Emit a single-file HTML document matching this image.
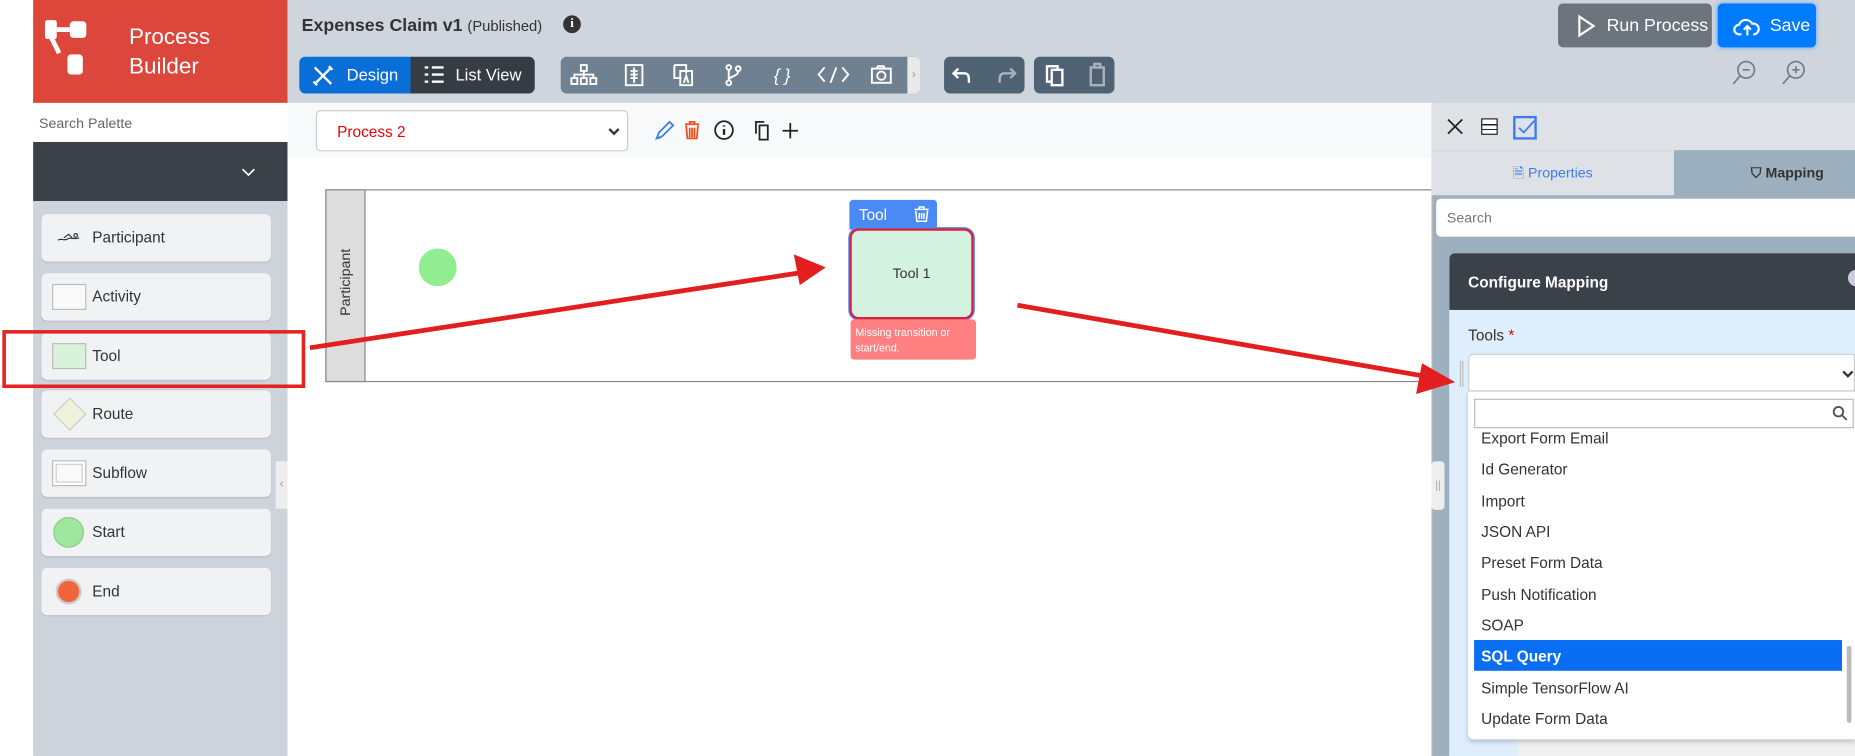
<!DOCTYPE html>
<html><head><meta charset="utf-8">
<style>
*{box-sizing:border-box;margin:0;padding:0}
html,body{width:1855px;height:756px;overflow:hidden;background:#fff;font-family:"Liberation Sans",sans-serif}
#w{position:absolute;left:0;top:0;width:1568px;height:639px;transform:scale(1.18304);transform-origin:0 0;overflow:hidden;background:#fff}
.a{position:absolute;white-space:nowrap}
.pi{position:absolute;left:35px;width:194px;height:40px;background:#f1f2f4;border-radius:5px;box-shadow:0 1px 1px rgba(0,0,0,.08);font-size:13px;color:#333}
.pi span{position:absolute;left:43px;top:12px}
.tb{position:absolute;top:48px;height:31px;border-radius:5px}
.dd{position:absolute;left:11px;font-size:13px;color:#333;white-space:nowrap}
svg{position:absolute;overflow:visible}
</style></head><body><div id="w">
<div class="a" style="left:243px;top:0;width:1325px;height:87px;background:#ced5dc"></div>
<div class="a" style="left:28px;top:0;width:215px;height:87px;background:#dc463b"></div>
<svg style="left:38px;top:17px" width="60" height="48"><rect x="0" y="0" width="10" height="16" rx="2" fill="#fff"/><rect x="10" y="6" width="11" height="4" fill="#fff"/><rect x="21" y="1" width="14" height="14" rx="3" fill="#fff"/><line x1="5" y1="14" x2="12" y2="28" stroke="#fff" stroke-width="4"/><rect x="19" y="29" width="13" height="17" rx="3" fill="#fff"/></svg>
<div class="a" style="left:109px;top:19px;color:#fff;font-size:19px;line-height:25px">Process<br>Builder</div>
<div class="a" style="left:255px;top:13px;font-size:15px;font-weight:bold;color:#333">Expenses Claim v1 <span style="font-weight:normal;font-size:12.5px">(Published)</span></div>
<div class="a" style="left:476px;top:13px;width:15px;height:15px;border-radius:50%;background:#333;color:#fff;font-size:11px;font-weight:bold;text-align:center;line-height:15px;font-family:'Liberation Serif'">i</div>
<div class="tb" style="left:253px;width:94px;background:#0a6ed8;border-radius:5px 0 0 5px;color:#fff;font-size:14px">
<svg style="left:11px;top:7px" width="18" height="18"><path d="M2 16L16 2M2 2l14 14M1 14l3 3M14 1l3 3" stroke="#fff" stroke-width="2" fill="none"/></svg>
<span style="position:absolute;left:40px;top:7px">Design</span></div>
<div class="tb" style="left:347px;width:105px;background:#363c43;border-radius:0 5px 5px 0;color:#fff;font-size:14px">
<svg style="left:12px;top:8px" width="16" height="15"><path d="M0 1h3M0 7h3M0 13h3M6 1h10M6 7h10M6 13h10" stroke="#fff" stroke-width="2"/></svg>
<span style="position:absolute;left:38px;top:7px">List View</span></div>
<div class="tb" style="left:474px;width:304px;background:#6f8190"></div>
<div class="tb" style="left:767px;width:11px;background:#e9e9e9;border-radius:0 5px 5px 0;color:#999;font-size:10px;text-align:center;line-height:31px">›</div>
<svg style="left:474px;top:48px" width="300" height="31" fill="none" stroke="#fff" stroke-width="1.6">
<rect x="17" y="7" width="5" height="5"/><path d="M19.5 12v3M11.5 18v-3h16v3M19.5 15v3"/><rect x="9" y="18" width="5" height="5"/><rect x="17" y="18" width="5" height="5"/><rect x="25" y="18" width="5" height="5"/>
<rect x="55" y="7" width="14" height="17"/><path d="M62 9v13M59 12h6M59 15h6M59 18h6"/>
<path d="M96 7h10v7M96 7v11h6"/><rect x="101" y="12" width="10" height="12"/><path d="M104 22l2-6 2 6"/>
<circle cx="142" cy="9" r="2"/><circle cx="142" cy="22" r="2"/><circle cx="150" cy="10" r="2"/><path d="M142 11v9M150 12c0 5-8 4-8 8"/>
<text x="180" y="21" fill="#fff" stroke="none" font-size="15" font-style="italic" font-family="Liberation Sans">{ }</text>
<path d="M223 9l-5 6 5 6M233 9l-5 13M238 9l5 6-5 6"/>
<rect x="263" y="10" width="16" height="12"/><path d="M267 10l1-2h5l1 2"/><circle cx="271" cy="16" r="3.5"/>
</svg>
<div class="tb" style="left:798px;width:68px;background:#4f6273">
<svg style="left:0;top:0" width="68" height="31" fill="none" stroke-width="2"><path d="M12 10l-4 4 4 4M8 14h9c3 0 4 2 4 5v3" stroke="#fff"/><path d="M56 10l4 4-4 4M60 14h-9c-3 0-4 2-4 5v3" stroke="#aab3bd"/></svg></div>
<div class="tb" style="left:874px;width:68px;background:#4f6273"><div class="a" style="left:10px;top:7px;width:11px;height:15px;border:2px solid #fff"></div><div class="a" style="left:14px;top:10px;width:11px;height:15px;border:2px solid #fff;background:#4f6273"></div><div class="a" style="left:47px;top:8px;width:13px;height:17px;border:2px solid #aab3bd"></div><div class="a" style="left:50px;top:5px;width:7px;height:5px;border:2px solid #aab3bd;background:#4f6273"></div></div>
<div class="a" style="left:1317px;top:3px;width:130px;height:37px;background:#6c757d;border-radius:4px;color:#fff;font-size:15px">
<svg style="left:17px;top:10px" width="14" height="18"><path d="M1 1l12 8-12 8z" fill="none" stroke="#fff" stroke-width="1.8"/></svg>
<span style="position:absolute;left:41px;top:10px">Run Process</span></div>
<div class="a" style="left:1452px;top:3px;width:83px;height:37px;background:#007bff;border-radius:4px;color:#fff;font-size:15px;box-shadow:0 0 4px #4aa3ff">
<svg style="left:13px;top:10px" width="24" height="18" fill="none" stroke="#fff" stroke-width="1.8"><path d="M7 16H5a4 4 0 010-8 6 6 0 0111-1 4.5 4.5 0 012 9h-1M12 17V9M9 12l3-3 3 3"/></svg>
<span style="position:absolute;left:44px;top:10px">Save</span></div>
<svg style="left:1462px;top:50px" width="70" height="25" fill="none" stroke="#778" stroke-width="1.4"><circle cx="14" cy="9" r="7"/><path d="M9 14l-6 7M11 9h6"/><circle cx="56" cy="9" r="7"/><path d="M51 14l-6 7M53 9h6M56 6v6"/></svg>
<div class="a" style="left:28px;top:87px;width:215px;height:33px;background:#fff;font-size:12px;color:#666;padding:10px 5px">Search Palette</div>
<div class="a" style="left:28px;top:120px;width:215px;height:50px;background:#3a4149"><svg style="left:176px;top:22px" width="12" height="8"><path d="M1 1l5 5 5-5" stroke="#fff" stroke-width="1.4" fill="none"/></svg></div>
<div class="a" style="left:28px;top:170px;width:215px;height:469px;background:#cdd3da"></div>
<div class="a" style="left:233px;top:390px;width:10px;height:40px;background:#eee;color:#999;font-size:10px;line-height:40px;text-align:center">‹</div>
<div class="pi" style="top:181px"><svg style="left:14px;top:16px" width="20" height="8" fill="none" stroke="#333" stroke-width="1"><path d="M0 6c3-2 5 1 8-1s5 1 10-1M5 4l4-3 3 3"/><circle cx="15" cy="2" r="1.5"/></svg><span>Participant</span></div>
<div class="pi" style="top:231px"><div class="a" style="left:9px;top:9px;width:29px;height:22px;border:1px solid #bbb;background:#f9f9f9"></div><span>Activity</span></div>
<div class="pi" style="top:281px"><div class="a" style="left:9px;top:9px;width:29px;height:22px;border:1px solid #bbb;background:#d9f2dc"></div><span>Tool</span></div>
<div class="pi" style="top:330px"><div class="a" style="left:14px;top:10px;width:20px;height:20px;border:1px solid #ccc;background:#eff3dc;transform:rotate(45deg)"></div><span>Route</span></div>
<div class="pi" style="top:380px"><div class="a" style="left:9px;top:9px;width:29px;height:22px;border:1px solid #bbb;background:#f9f9f9;box-shadow:inset 0 0 0 2px #fff,inset 0 0 0 3px #ccc"></div><span>Subflow</span></div>
<div class="pi" style="top:430px"><div class="a" style="left:10px;top:7px;width:26px;height:26px;border-radius:50%;background:#9fe79f;border:1px solid #8c8"></div><span>Start</span></div>
<div class="pi" style="top:480px"><div class="a" style="left:12px;top:9px;width:22px;height:22px;border-radius:50%;background:#f0663a;border:2px solid #ccc"></div><span>End</span></div>
<div class="a" style="left:2px;top:279px;width:256px;height:49px;border:3px solid #e52222"></div>
<div class="a" style="left:243px;top:87px;width:967px;height:46px;background:#f8f9fa"></div>
<div class="a" style="left:267px;top:93px;width:264px;height:35px;background:#fff;border:1px solid #ccc;border-radius:4px;color:#e00;font-size:13px;padding:10px 17px">Process 2<svg style="left:246px;top:14px" width="10" height="7"><path d="M1 1l4 4 4-4" stroke="#333" stroke-width="2" fill="none"/></svg></div>
<svg style="left:553px;top:101px" width="130" height="18" fill="none" stroke-width="1.5">
<path d="M2 16l2-5 9-9 3 3-9 9zM2 16l4-1" stroke="#3a7df0"/>
<path d="M26 4h12M30 4V2h4v2M27 5l1 11h8l1-11M30 7v8M32 7v8M34 7v8" stroke="#f05020"/>
<circle cx="59" cy="9" r="7.5" stroke="#222"/><path d="M59 8v5M59 5v1" stroke="#222" stroke-width="2"/>
<path d="M86 12V2h7M89 5h7v12h-7z" stroke="#222"/>
<path d="M115 3v13M108.5 9.5h13" stroke="#222"/>
</svg>
<div class="a" style="left:275px;top:160px;width:940px;height:163px;border:1px solid #888"></div>
<div class="a" style="left:275px;top:160px;width:34px;height:163px;background:#ddd;border:1px solid #888"></div>
<div class="a" style="left:265px;top:233px;width:54px;font-size:12px;color:#333;transform:rotate(-90deg);text-align:center">Participant</div>
<div class="a" style="left:354px;top:210px;width:32px;height:32px;border-radius:50%;background:#90ee90"></div>
<div class="a" style="left:718px;top:169px;width:74px;height:25px;background:#4a8af4;border-radius:3px 3px 0 0;color:#fff;font-size:13px;padding:5px 8px">Tool
<svg style="left:55px;top:6px" width="12" height="13" fill="none" stroke="#fff" stroke-width="1.3"><path d="M0 2h12M4 2V0h4v2M1 3l1 9h8l1-9M4 5v5M6 5v5M8 5v5"/></svg></div>
<div class="a" style="left:718px;top:193px;width:105px;height:77px;background:#d4f2e0;border:2px solid #e0203a;border-radius:8px;font-size:12px;color:#333;text-align:center;line-height:73px;box-shadow:0 0 0 1px #4a8af4">Tool 1</div>
<div class="a" style="left:719px;top:270px;width:106px;height:34px;background:#ff8080;border-radius:3px;color:#fff;font-size:9px;padding:5px 4px;line-height:13px;white-space:normal">Missing transition or start/end.</div>
<svg style="left:0;top:0" width="1568" height="639">
<line x1="262" y1="294" x2="680" y2="230" stroke="#e31e1e" stroke-width="4"/>
<polygon points="698,226 671,215 676,241" fill="#e31e1e"/>
</svg>
<div class="a" style="left:1210px;top:87px;width:358px;height:552px;background:#9db0c0;border-left:1px solid #bbb"></div>
<div class="a" style="left:1210px;top:87px;width:358px;height:40px;background:#dee2e6"></div>
<div class="a" style="left:1210px;top:127px;width:205px;height:38px;background:#dee2e6;color:#3a7df0;font-size:12px;text-align:center;line-height:38px">🗎 Properties</div>
<div class="a" style="left:1415px;top:127px;width:153px;height:38px;background:#9db0c0;border-radius:4px 0 0 0;color:#333;font-size:12px;font-weight:bold;line-height:38px;padding-left:65px">⛉ Mapping</div>
<svg style="left:1223px;top:100px" width="14" height="14"><path d="M1 1l12 12M13 1L1 13" stroke="#222" stroke-width="1.5"/></svg>
<div class="a" style="left:1252px;top:100px;width:14px;height:14px;border:1.5px solid #222;background:linear-gradient(#fff 4px,#222 4px,#222 5px,#fff 5px,#fff 8px,#222 8px,#222 9px,#fff 9px)"></div>
<div class="a" style="left:1279px;top:98px;width:20px;height:20px;border:2px solid #3a7df0"><svg style="left:2px;top:2px" width="14" height="12"><path d="M1 6l4 4 9-10" stroke="#3a7df0" stroke-width="1.5" fill="none"/></svg></div>
<div class="a" style="left:1214px;top:168px;width:354px;height:32px;background:#fff;border-radius:4px 0 0 4px;font-size:12px;color:#777;padding:9px 9px">Search</div>
<div class="a" style="left:1225px;top:214px;width:343px;height:425px;background:#dfeefc;border-radius:5px 0 0 0;overflow:hidden">
<div class="a" style="left:0;top:0;width:343px;height:48px;background:#3a4149;color:#fff;font-size:13px;font-weight:bold;padding:17px 16px">Configure Mapping</div>
<div class="a" style="left:337px;top:14px;width:14px;height:14px;border-radius:50%;background:#ccd"></div>
<div class="a" style="left:16px;top:62px;font-size:13px;color:#333">Tools <span style="color:#e00">*</span></div>
<div class="a" style="left:58px;top:411px;width:285px;height:20px;background:#f0f0f0"></div>
</div>
<div class="a" style="left:1234px;top:305px;width:3px;height:22px;border-left:1px solid #bbb;border-right:1px solid #bbb"></div>
<div class="a" style="left:1210px;top:390px;width:11px;height:41px;background:#eee;border-radius:3px;color:#aaa;font-size:9px;text-align:center;line-height:41px">||</div>
<div class="a" style="left:1241px;top:299px;width:327px;height:32px;background:#fff;border:1px solid #ccc;border-radius:4px 0 0 0"><svg style="left:315px;top:13px" width="10" height="7"><path d="M1 1l4 4 4-4" stroke="#333" stroke-width="2" fill="none"/></svg></div>
<div class="a" style="left:1241px;top:331px;width:327px;height:294px;background:#fff;border-radius:0 0 0 4px;box-shadow:0 2px 4px rgba(0,0,0,.2);overflow:hidden">
<div class="a" style="left:5px;top:6px;width:321px;height:25px;border:1px solid #bbb"><svg style="left:302px;top:5px" width="13" height="13" fill="none" stroke="#555" stroke-width="1.6"><circle cx="5" cy="5" r="4"/><path d="M8 8l4 4"/></svg></div>
<div class="dd" style="top:32px">Export Form Email</div>
<div class="dd" style="top:58px">Id Generator</div>
<div class="dd" style="top:85px">Import</div>
<div class="dd" style="top:111px">JSON API</div>
<div class="dd" style="top:137px">Preset Form Data</div>
<div class="dd" style="top:164px">Push Notification</div>
<div class="dd" style="top:190px">SOAP</div>
<div class="a" style="left:5px;top:210px;width:311px;height:26px;background:#0a6ef5"></div>
<div class="dd" style="top:216px;color:#fff;font-weight:bold">SQL Query</div>
<div class="dd" style="top:243px">Simple TensorFlow AI</div>
<div class="dd" style="top:269px">Update Form Data</div>
<div class="a" style="left:320px;top:215px;width:4px;height:65px;background:#bbb;border-radius:2px"></div>
</div>
<svg style="left:0;top:0" width="1568" height="639">
<line x1="860" y1="258" x2="1210" y2="319" stroke="#e31e1e" stroke-width="4"/>
<polygon points="1230,323 1202,307 1197,333" fill="#e31e1e"/>
</svg>
</div></body></html>
